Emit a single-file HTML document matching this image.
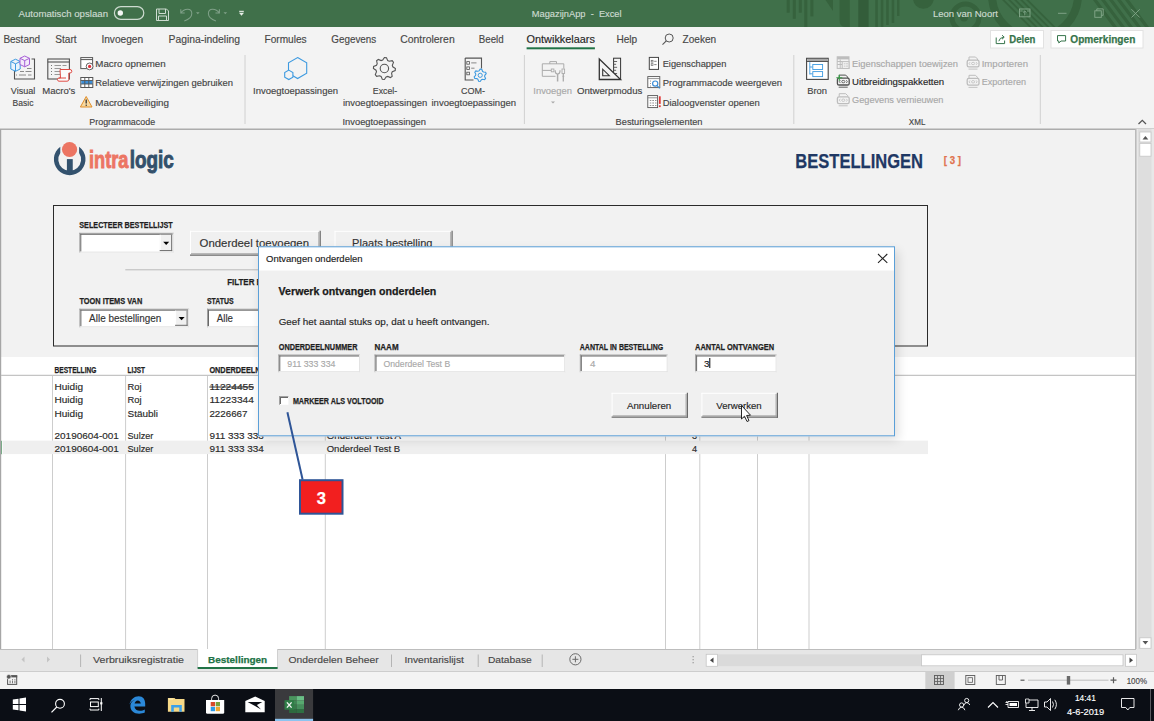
<!DOCTYPE html>
<html><head><meta charset="utf-8"><title>MagazijnApp - Excel</title>
<style>
html,body{margin:0;padding:0;width:1154px;height:721px;overflow:hidden;background:#f3f3f3;}
svg{display:block;font-family:"Liberation Sans", sans-serif;}
text{white-space:pre;}
</style></head><body>
<svg width="1154" height="721" viewBox="0 0 1154 721">
<rect x="0" y="0" width="1154" height="27" fill="#40704a" />
<clipPath id="tb"><rect x="0" y="0" width="1154" height="27"/></clipPath><g clip-path="url(#tb)">
<rect x="786.7" y="0" width="3" height="12.7" fill="#36623d" />
<rect x="792.8" y="0" width="3" height="18.8" fill="#36623d" />
<rect x="798.8" y="0" width="3" height="12.7" fill="#36623d" />
<rect x="804.3" y="0" width="3" height="27" fill="#36623d" />
<rect x="810.4" y="0" width="3" height="16.4" fill="#36623d" />
<path d="M825.5 0 L833 0 L833 11 Z" fill="#36623d" stroke="none" stroke-width="1" />
<path d="M839.5 0 H849.8 V27 H845 Q839.5 27 839.5 20 Z" fill="#36623d" stroke="none" stroke-width="1" />
<rect x="858.3" y="0" width="10.3" height="27" fill="#335d3a" />
<rect x="875.3" y="0" width="2.5" height="27" fill="#36623d" />
<rect x="880.8" y="0" width="2.5" height="27" fill="#36623d" />
<rect x="886.2" y="0" width="2.5" height="25" fill="#36623d" />
<rect x="891.7" y="0" width="2.5" height="23" fill="#36623d" />
<rect x="897" y="0" width="2.5" height="16" fill="#36623d" />
<circle cx="923.4" cy="-1.7" r="10.4" fill="#36623d"/>
<circle cx="965.5" cy="17.5" r="13.5" fill="none" stroke="#36623d" stroke-width="5"/>
<circle cx="964" cy="17.5" r="4" fill="#36623d"/>
<circle cx="1035" cy="-5" r="43" fill="none" stroke="#36623d" stroke-width="8"/>
<path d="M1002 0 L1004.6 0 L1031.6 27 L1029 27 Z" fill="#36623d" stroke="none" stroke-width="1" />
<path d="M1008 0 L1010.6 0 L1037.6 27 L1035 27 Z" fill="#36623d" stroke="none" stroke-width="1" />
<path d="M1014 0 L1016.6 0 L1043.6 27 L1041 27 Z" fill="#36623d" stroke="none" stroke-width="1" />
<path d="M1020 0 L1022.6 0 L1049.6 27 L1047 27 Z" fill="#36623d" stroke="none" stroke-width="1" />
<path d="M1026 0 L1028.6 0 L1055.6 27 L1053 27 Z" fill="#36623d" stroke="none" stroke-width="1" />
<path d="M1093 0 L1097 0 L1117 27 L1113 27 Z" fill="#36623d" stroke="none" stroke-width="1" />
<path d="M1101 0 L1105 0 L1125 27 L1121 27 Z" fill="#36623d" stroke="none" stroke-width="1" />
<path d="M1109 0 L1113 0 L1133 27 L1129 27 Z" fill="#36623d" stroke="none" stroke-width="1" />
<path d="M1117 0 L1121 0 L1141 27 L1137 27 Z" fill="#36623d" stroke="none" stroke-width="1" />
<path d="M1125 0 L1129 0 L1149 27 L1145 27 Z" fill="#36623d" stroke="none" stroke-width="1" />
</g>
<text x="18.6" y="16.6" font-size="9.4" fill="#cddbd0" textLength="89.4" lengthAdjust="spacingAndGlyphs" stroke="#cddbd0" stroke-width="0.15" >Automatisch opslaan</text>
<rect x="114.4" y="6.6" width="29.4" height="12.8" rx="6.4" fill="none" stroke="#cddbd0" stroke-width="1.2"/>
<circle cx="120.3" cy="13" r="2.7" fill="#f4f6f4"/>
<path d="M156.5 9 H166.5 L168.5 11 V20.5 H156.5 Z M159 9 V13.5 H165.5 V9 M158.5 20.5 V16 H166.5 V20.5" fill="none" stroke="#cddbd0" stroke-width="1" />
<path d="M180.8 9.2 V13 H184.7 M180.8 13 C184.5 7.8 191.8 7.8 191.8 13.5 C191.8 17 188.5 19.5 184.3 21" fill="none" stroke="#7fa088" stroke-width="1.05" />
<path d="M196 12.2 L199.6 12.2 L197.8 14.2 Z" fill="#7fa088" stroke="none" stroke-width="1" />
<path d="M219.4 9.2 V13 H215.5 M219.4 13 C215.7 7.8 208.4 7.8 208.4 13.5 C208.4 17 211.7 19.5 215.9 21" fill="none" stroke="#7fa088" stroke-width="1.05" />
<path d="M223.5 12.2 L227.1 12.2 L225.3 14.2 Z" fill="#7fa088" stroke="none" stroke-width="1" />
<rect x="239.2" y="10.8" width="4.6" height="1.1" fill="#e8efe9" />
<path d="M239 12.8 L244 12.8 L241.5 15.8 Z" fill="#e8efe9" stroke="none" stroke-width="1" />
<text x="531.8" y="16.6" font-size="9.4" fill="#cddbd0" textLength="89.8" lengthAdjust="spacingAndGlyphs" stroke="#cddbd0" stroke-width="0.15" >MagazijnApp  -  Excel</text>
<text x="933.0" y="16.6" font-size="9.4" fill="#cddbd0" textLength="65.0" lengthAdjust="spacingAndGlyphs" stroke="#cddbd0" stroke-width="0.15" >Leon van Noort</text>
<rect x="1019.5" y="9" width="10.5" height="7.8" fill="none" stroke="#84a88b" stroke-width="0.9"/>
<path d="M1024.75 15.5 V11 M1023 12.6 L1024.75 10.9 L1026.5 12.6 M1019.5 11 H1022.5 M1027 11 H1030" fill="none" stroke="#84a88b" stroke-width="0.8" />
<line x1="1058" y1="13.3" x2="1066.5" y2="13.3" stroke="#84a88b" stroke-width="0.9" />
<rect x="1094.8" y="10.8" width="6.5" height="6.5" fill="none" stroke="#84a88b" stroke-width="0.9"/>
<path d="M1096.8 10.8 V8.9 H1103.2 V15.3 H1101.3" fill="none" stroke="#84a88b" stroke-width="0.9" />
<path d="M1131.5 9.3 L1139.7 17.5 M1139.7 9.3 L1131.5 17.5" fill="none" stroke="#84a88b" stroke-width="0.9" />
<rect x="0" y="27" width="1154" height="102" fill="#f3f3f3" />
<rect x="0" y="128.5" width="1154" height="1.5" fill="#acacac" />
<text x="3.4" y="43.3" font-size="10.3" fill="#474747" textLength="36.7" lengthAdjust="spacingAndGlyphs" stroke="#474747" stroke-width="0.15" >Bestand</text>
<text x="55.2" y="43.3" font-size="10.3" fill="#474747" textLength="21.4" lengthAdjust="spacingAndGlyphs" stroke="#474747" stroke-width="0.15" >Start</text>
<text x="101.4" y="43.3" font-size="10.3" fill="#474747" textLength="41.7" lengthAdjust="spacingAndGlyphs" stroke="#474747" stroke-width="0.15" >Invoegen</text>
<text x="168.5" y="43.3" font-size="10.3" fill="#474747" textLength="71.5" lengthAdjust="spacingAndGlyphs" stroke="#474747" stroke-width="0.15" >Pagina-indeling</text>
<text x="264.5" y="43.3" font-size="10.3" fill="#474747" textLength="42.1" lengthAdjust="spacingAndGlyphs" stroke="#474747" stroke-width="0.15" >Formules</text>
<text x="331.3" y="43.3" font-size="10.3" fill="#474747" textLength="44.9" lengthAdjust="spacingAndGlyphs" stroke="#474747" stroke-width="0.15" >Gegevens</text>
<text x="400.2" y="43.3" font-size="10.3" fill="#474747" textLength="54.5" lengthAdjust="spacingAndGlyphs" stroke="#474747" stroke-width="0.15" >Controleren</text>
<text x="478.8" y="43.3" font-size="10.3" fill="#474747" textLength="24.9" lengthAdjust="spacingAndGlyphs" stroke="#474747" stroke-width="0.15" >Beeld</text>
<text x="616.4" y="43.3" font-size="10.3" fill="#474747" textLength="20.8" lengthAdjust="spacingAndGlyphs" stroke="#474747" stroke-width="0.15" >Help</text>
<text x="682.6" y="43.3" font-size="10.3" fill="#474747" textLength="33.6" lengthAdjust="spacingAndGlyphs" stroke="#474747" stroke-width="0.15" >Zoeken</text>
<text x="526.6" y="43.3" font-size="10.3" fill="#262626" textLength="68.3" lengthAdjust="spacingAndGlyphs" stroke="#262626" stroke-width="0.15" >Ontwikkelaars</text>
<rect x="526.6" y="47.3" width="68.3" height="2" fill="#217346" />
<circle cx="669.2" cy="38" r="4" fill="none" stroke="#555" stroke-width="1"/>
<line x1="666.3" y1="40.9" x2="662.5" y2="44.7" stroke="#555" stroke-width="1.1" />
<rect x="990.5" y="30.5" width="53" height="17.5" fill="#fff" stroke="#e2e2e2" stroke-width="1"/>
<rect x="1051" y="30.5" width="92" height="17.5" fill="#fff" stroke="#e2e2e2" stroke-width="1"/>
<text x="1009.3" y="43.2" font-size="10.5" fill="#36744b" font-weight="bold" textLength="26.0" lengthAdjust="spacingAndGlyphs" stroke="#36744b" stroke-width="0.25" >Delen</text>
<text x="1070.3" y="43.2" font-size="10.5" fill="#36744b" font-weight="bold" textLength="65.0" lengthAdjust="spacingAndGlyphs" stroke="#36744b" stroke-width="0.25" >Opmerkingen</text>
<path d="M996.2 37.5 V43.6 H1004.6 V40.5 M998.8 41.2 Q999.5 37.6 1003.8 37.2 M1002 35.2 L1004.2 37.2 L1002 39.2" fill="none" stroke="#36744b" stroke-width="1" />
<path d="M1057.5 35.6 H1065.6 V41 H1061 L1058.8 43 V41 H1057.5 Z" fill="none" stroke="#36744b" stroke-width="1" />
<line x1="245" y1="55" x2="245" y2="124" stroke="#d0d0d0" stroke-width="1" />
<line x1="524.4" y1="55" x2="524.4" y2="124" stroke="#d0d0d0" stroke-width="1" />
<line x1="793.8" y1="55" x2="793.8" y2="124" stroke="#d0d0d0" stroke-width="1" />
<line x1="1040.3" y1="55" x2="1040.3" y2="124" stroke="#d0d0d0" stroke-width="1" />
<text x="89.3" y="124.6" font-size="9.5" fill="#444444" textLength="65.8" lengthAdjust="spacingAndGlyphs" stroke="#444444" stroke-width="0.15" >Programmacode</text>
<text x="342.5" y="124.6" font-size="9.5" fill="#444444" textLength="83.5" lengthAdjust="spacingAndGlyphs" stroke="#444444" stroke-width="0.15" >Invoegtoepassingen</text>
<text x="615.6" y="124.6" font-size="9.5" fill="#444444" textLength="86.9" lengthAdjust="spacingAndGlyphs" stroke="#444444" stroke-width="0.15" >Besturingselementen</text>
<text x="908.8" y="124.6" font-size="9.5" fill="#444444" textLength="16.6" lengthAdjust="spacingAndGlyphs" stroke="#444444" stroke-width="0.15" >XML</text>
<text x="10.8" y="93.8" font-size="9.5" fill="#444444" textLength="24.4" lengthAdjust="spacingAndGlyphs" stroke="#444444" stroke-width="0.15" >Visual</text>
<text x="12.6" y="106.4" font-size="9.5" fill="#444444" textLength="20.8" lengthAdjust="spacingAndGlyphs" stroke="#444444" stroke-width="0.15" >Basic</text>
<text x="42.2" y="93.8" font-size="9.5" fill="#444444" textLength="33.1" lengthAdjust="spacingAndGlyphs" stroke="#444444" stroke-width="0.15" >Macro's</text>
<text x="253.0" y="93.8" font-size="9.5" fill="#444444" textLength="85.0" lengthAdjust="spacingAndGlyphs" stroke="#444444" stroke-width="0.15" >Invoegtoepassingen</text>
<text x="372.8" y="93.8" font-size="9.5" fill="#444444" textLength="24.4" lengthAdjust="spacingAndGlyphs" stroke="#444444" stroke-width="0.15" >Excel-</text>
<text x="343.0" y="106.4" font-size="9.5" fill="#444444" textLength="84.2" lengthAdjust="spacingAndGlyphs" stroke="#444444" stroke-width="0.15" >invoegtoepassingen</text>
<text x="461.0" y="93.8" font-size="9.5" fill="#444444" textLength="24.0" lengthAdjust="spacingAndGlyphs" stroke="#444444" stroke-width="0.15" >COM-</text>
<text x="431.5" y="106.4" font-size="9.5" fill="#444444" textLength="84.5" lengthAdjust="spacingAndGlyphs" stroke="#444444" stroke-width="0.15" >invoegtoepassingen</text>
<text x="533.3" y="93.8" font-size="9.5" fill="#a8a8a8" textLength="38.7" lengthAdjust="spacingAndGlyphs" stroke="#a8a8a8" stroke-width="0.15" >Invoegen</text>
<path d="M551 101.5 L555 101.5 L553 103.5 Z" fill="#a8a8a8" stroke="none" stroke-width="1" />
<text x="577.0" y="93.8" font-size="9.5" fill="#444444" textLength="65.3" lengthAdjust="spacingAndGlyphs" stroke="#444444" stroke-width="0.15" >Ontwerpmodus</text>
<text x="807.2" y="93.8" font-size="9.5" fill="#444444" textLength="19.8" lengthAdjust="spacingAndGlyphs" stroke="#444444" stroke-width="0.15" >Bron</text>
<text x="95.3" y="66.9" font-size="9.5" fill="#444444" textLength="70.4" lengthAdjust="spacingAndGlyphs" stroke="#444444" stroke-width="0.15" >Macro opnemen</text>
<text x="95.3" y="86.4" font-size="9.5" fill="#444444" textLength="137.6" lengthAdjust="spacingAndGlyphs" stroke="#444444" stroke-width="0.15" >Relatieve verwijzingen gebruiken</text>
<text x="95.3" y="105.7" font-size="9.5" fill="#444444" textLength="73.7" lengthAdjust="spacingAndGlyphs" stroke="#444444" stroke-width="0.15" >Macrobeveiliging</text>
<text x="662.7" y="66.9" font-size="9.5" fill="#444444" textLength="63.7" lengthAdjust="spacingAndGlyphs" stroke="#444444" stroke-width="0.15" >Eigenschappen</text>
<text x="662.7" y="86.4" font-size="9.5" fill="#444444" textLength="119.3" lengthAdjust="spacingAndGlyphs" stroke="#444444" stroke-width="0.15" >Programmacode weergeven</text>
<text x="662.7" y="105.7" font-size="9.5" fill="#444444" textLength="97.0" lengthAdjust="spacingAndGlyphs" stroke="#444444" stroke-width="0.15" >Dialoogvenster openen</text>
<text x="852.0" y="66.6" font-size="9.5" fill="#a8a8a8" textLength="106.0" lengthAdjust="spacingAndGlyphs" stroke="#a8a8a8" stroke-width="0.15" >Eigenschappen toewijzen</text>
<text x="852.0" y="85.1" font-size="9.5" fill="#262626" textLength="92.2" lengthAdjust="spacingAndGlyphs" stroke="#262626" stroke-width="0.15" >Uitbreidingspakketten</text>
<text x="852.0" y="103.4" font-size="9.5" fill="#a8a8a8" textLength="91.5" lengthAdjust="spacingAndGlyphs" stroke="#a8a8a8" stroke-width="0.15" >Gegevens vernieuwen</text>
<text x="981.7" y="66.6" font-size="9.5" fill="#a8a8a8" textLength="46.3" lengthAdjust="spacingAndGlyphs" stroke="#a8a8a8" stroke-width="0.15" >Importeren</text>
<text x="981.7" y="85.1" font-size="9.5" fill="#a8a8a8" textLength="44.3" lengthAdjust="spacingAndGlyphs" stroke="#a8a8a8" stroke-width="0.15" >Exporteren</text>
<path d="M1138.5 124 L1142.3 120.3 L1146 124" fill="none" stroke="#555" stroke-width="1.3" />
<path d="M14.5 66 V79 H34.5 V59 H31.5" fill="none" stroke="#505050" stroke-width="1.1" />
<line x1="27" y1="68.5" x2="31.5" y2="68.5" stroke="#8a8a8a" stroke-width="1" />
<line x1="20" y1="71.5" x2="24" y2="71.5" stroke="#8a8a8a" stroke-width="1" />
<line x1="25.5" y1="71.5" x2="31.5" y2="71.5" stroke="#8a8a8a" stroke-width="1" />
<line x1="16" y1="75" x2="17" y2="75" stroke="#8a8a8a" stroke-width="1" />
<line x1="19" y1="75" x2="26" y2="75" stroke="#8a8a8a" stroke-width="1" />
<line x1="28" y1="75" x2="31.5" y2="75" stroke="#8a8a8a" stroke-width="1" />
<path d="M10.8 61.5 L15.5 59.2 L20.2 61.5 V69 L15.5 71.3 L10.8 69 Z M10.8 61.5 L15.5 63.8 L20.2 61.5 M15.5 63.8 V71.3" fill="#eaf4fc" stroke="#3d9ae0" stroke-width="1" />
<path d="M20 58.3 L24.7 56 L29.5 58.3 V64.5 L24.7 66.8 L20 64.5 Z M20 58.3 L24.7 60.6 L29.5 58.3 M24.7 60.6 V66.8" fill="#f3eafa" stroke="#a65fd6" stroke-width="1" />
<rect x="47.8" y="59" width="21.6" height="20" fill="none" stroke="#505050" stroke-width="1.1"/>
<line x1="47.8" y1="62" x2="69.4" y2="62" stroke="#505050" stroke-width="1.1" />
<line x1="51" y1="65.5" x2="52" y2="65.5" stroke="#777" stroke-width="1" />
<line x1="54.5" y1="65.5" x2="61" y2="65.5" stroke="#999" stroke-width="1" />
<line x1="51" y1="68.5" x2="52" y2="68.5" stroke="#777" stroke-width="1" />
<line x1="54.5" y1="68.5" x2="61" y2="68.5" stroke="#999" stroke-width="1" />
<line x1="51" y1="71.5" x2="52" y2="71.5" stroke="#777" stroke-width="1" />
<line x1="54.5" y1="71.5" x2="61" y2="71.5" stroke="#999" stroke-width="1" />
<line x1="51" y1="74.5" x2="52" y2="74.5" stroke="#777" stroke-width="1" />
<line x1="54.5" y1="74.5" x2="61" y2="74.5" stroke="#999" stroke-width="1" />
<line x1="62.5" y1="65.5" x2="66.5" y2="65.5" stroke="#999" stroke-width="1" />
<path d="M60 69.5 H70 Q71.8 69.5 71.8 71.3 Q71.8 73 70 73 H68.8 V79.5 Q68.8 81.2 67 81.2 H59 Q57.5 81.2 57.5 79.5 Q57.5 78 59 78 H60.5 Z" fill="#fbfbfb" stroke="#e04a43" stroke-width="1" />
<line x1="59" y1="78" x2="66" y2="78" stroke="#e04a43" stroke-width="1" />
<rect x="80.8" y="57.6" width="11.8" height="11" fill="#fff" stroke="#555" stroke-width="1"/>
<line x1="80.8" y1="59.6" x2="92.6" y2="59.6" stroke="#555" stroke-width="1" />
<circle cx="89.6" cy="66.4" r="3.4" fill="#fff" stroke="#555" stroke-width="0.9"/>
<circle cx="89.6" cy="66.4" r="1.6" fill="#e0303a"/>
<rect x="80.8" y="77.5" width="12" height="10" fill="#fff" stroke="#555" stroke-width="1"/>
<rect x="81.3" y="80.5" width="11" height="3.5" fill="#3d8fd8" />
<line x1="84.8" y1="77.5" x2="84.8" y2="87.5" stroke="#555" stroke-width="0.9" />
<line x1="88.8" y1="77.5" x2="88.8" y2="87.5" stroke="#555" stroke-width="0.9" />
<line x1="80.8" y1="80.5" x2="92.8" y2="80.5" stroke="#555" stroke-width="0.9" />
<line x1="80.8" y1="84" x2="92.8" y2="84" stroke="#555" stroke-width="0.9" />
<path d="M86.2 96.5 L92 107 H80.4 Z" fill="#f8d9a0" stroke="#e08e2b" stroke-width="1" />
<line x1="86.2" y1="99.5" x2="86.2" y2="103.5" stroke="#333" stroke-width="1.3" />
<rect x="85.6" y="104.6" width="1.3" height="1.3" fill="#333" />
<path d="M297.6 57.6 L306.7 62.8 L306.7 73.3 L297.6 78.6 L288.5 73.3 L288.5 62.8 Z" fill="none" stroke="#3d9ae0" stroke-width="1.1" />
<path d="M288.8 70.1 L292.9 72.5 L292.9 77.1 L288.8 79.5 L284.7 77.1 L284.7 72.5 Z" fill="#f3f3f3" stroke="#3d9ae0" stroke-width="1.1" />
<path d="M384.4 57.5 L386.5 57.7 L387.7 60.6 L389.2 61.3 L392.2 60.7 L393.5 62.4 L392.3 65.2 L392.8 66.8 L395.4 68.5 L395.2 70.6 L392.3 71.8 L391.6 73.3 L392.2 76.3 L390.5 77.6 L387.7 76.4 L386.1 76.9 L384.4 79.5 L382.3 79.3 L381.1 76.4 L379.6 75.7 L376.6 76.3 L375.3 74.6 L376.5 71.8 L376.0 70.2 L373.4 68.5 L373.6 66.4 L376.5 65.2 L377.2 63.7 L376.6 60.7 L378.3 59.4 L381.1 60.6 L382.7 60.1 Z" fill="none" stroke="#555" stroke-width="1.1" />
<circle cx="384.4" cy="68.5" r="4.2" fill="none" stroke="#555" stroke-width="1.1"/>
<path d="M465.2 58.1 H481.5 V68.5 M465.2 58.1 V80 H473.5" fill="none" stroke="#555" stroke-width="1.1" />
<rect x="466.8" y="61.6" width="2.6" height="2.6" fill="none" stroke="#555" stroke-width="0.8"/>
<rect x="466.8" y="66.9" width="2.6" height="2.6" fill="none" stroke="#555" stroke-width="0.8"/>
<rect x="466.8" y="72.2" width="2.6" height="2.6" fill="none" stroke="#555" stroke-width="0.8"/>
<line x1="471.2" y1="62.9" x2="476.5" y2="62.9" stroke="#888" stroke-width="1" />
<line x1="471.2" y1="68.2" x2="474.5" y2="68.2" stroke="#888" stroke-width="1" />
<path d="M480.2 69.1 L481.8 69.3 L482.5 71.3 L483.5 72.0 L485.6 72.2 L486.2 73.7 L484.8 75.3 L484.6 76.5 L485.6 78.4 L484.6 79.7 L482.5 79.3 L481.4 79.7 L480.2 81.5 L478.6 81.3 L477.9 79.3 L476.9 78.6 L474.8 78.4 L474.2 76.9 L475.6 75.3 L475.8 74.1 L474.8 72.2 L475.8 70.9 L477.9 71.3 L479.0 70.9 Z" fill="#f3f3f3" stroke="#3d9ae0" stroke-width="1.1" />
<circle cx="480.2" cy="75.3" r="2.1" fill="none" stroke="#3d9ae0" stroke-width="1"/>
<path d="M542.3 76.3 V63.8 H563.8 V68.5 M549.8 63.8 V61.6 H556.5 V63.8 M542.3 70.4 H551 M542.3 76.3 H555.5" fill="none" stroke="#ababab" stroke-width="1" />
<rect x="551.3" y="69" width="2.6" height="2.8" fill="none" stroke="#ababab" stroke-width="0.9"/>
<path d="M557.6 74 V81.5" fill="none" stroke="#ababab" stroke-width="1.5" />
<path d="M555.2 70.3 Q555 73.8 557.6 74 Q560.2 73.8 560 70.3" fill="none" stroke="#ababab" stroke-width="1.2" />
<rect x="562" y="69" width="2.6" height="4.5" fill="none" stroke="#ababab" stroke-width="0.9"/>
<path d="M563.3 73.5 V76.3 M562.4 76.3 H564.2 M563.3 76.3 V81.5" fill="none" stroke="#ababab" stroke-width="1.3" />
<rect x="613.6" y="58.2" width="7" height="21.3" fill="#f3f3f3" stroke="#333" stroke-width="1"/>
<line x1="613.6" y1="61.5" x2="617.1" y2="61.5" stroke="#555" stroke-width="0.9" />
<line x1="613.6" y1="64.3" x2="616.1" y2="64.3" stroke="#555" stroke-width="0.9" />
<line x1="613.6" y1="67.3" x2="617.1" y2="67.3" stroke="#555" stroke-width="0.9" />
<line x1="613.6" y1="70.3" x2="616.1" y2="70.3" stroke="#555" stroke-width="0.9" />
<line x1="613.6" y1="73.5" x2="617.1" y2="73.5" stroke="#555" stroke-width="0.9" />
<path d="M599.3 59 L620.6 79.5 H599.3 Z" fill="#f3f3f3" stroke="#333" stroke-width="1.3" />
<path d="M602.7 69.2 V75.7 H609.3 Z" fill="none" stroke="#333" stroke-width="1.1" />
<rect x="649.3" y="57.4" width="9.2" height="12" fill="#fff" stroke="#444" stroke-width="1"/>
<rect x="651.2" y="60.300000000000004" width="1.8" height="1.8" fill="none" stroke="#666" stroke-width="0.7"/>
<rect x="654.2" y="60.800000000000004" width="2.4" height="0.9" fill="#777" />
<rect x="651.2" y="63.699999999999996" width="1.8" height="1.8" fill="none" stroke="#666" stroke-width="0.7"/>
<rect x="654.2" y="64.19999999999999" width="2.4" height="0.9" fill="#777" />
<rect x="647.8" y="76.6" width="12" height="11" fill="#fff" stroke="#555" stroke-width="0.9"/>
<line x1="647.8" y1="78.6" x2="659.8" y2="78.6" stroke="#777" stroke-width="0.8" />
<rect x="650" y="80.6" width="0.9" height="0.9" fill="#777" />
<rect x="650" y="83.1" width="0.9" height="0.9" fill="#777" />
<rect x="650" y="85.6" width="0.9" height="0.9" fill="#777" />
<circle cx="655.2" cy="83.6" r="2.6" fill="none" stroke="#3d8fd8" stroke-width="1.2"/>
<line x1="657" y1="85.6" x2="659.8" y2="88.4" stroke="#3d8fd8" stroke-width="1.3" />
<rect x="647.8" y="95.6" width="9.8" height="12" fill="#fff" stroke="#555" stroke-width="0.9"/>
<line x1="647.8" y1="97.8" x2="657.6" y2="97.8" stroke="#777" stroke-width="0.8" />
<line x1="649.8" y1="100.5" x2="651.3" y2="100.5" stroke="#888" stroke-width="0.9" />
<line x1="652.3" y1="100.5" x2="654" y2="100.5" stroke="#888" stroke-width="0.9" />
<line x1="655" y1="100.5" x2="656.5" y2="100.5" stroke="#888" stroke-width="0.9" />
<line x1="649.8" y1="103" x2="651.3" y2="103" stroke="#888" stroke-width="0.9" />
<line x1="652.3" y1="103" x2="654" y2="103" stroke="#888" stroke-width="0.9" />
<line x1="655" y1="103" x2="656.5" y2="103" stroke="#888" stroke-width="0.9" />
<line x1="649.8" y1="105.5" x2="651.3" y2="105.5" stroke="#888" stroke-width="0.9" />
<line x1="652.3" y1="105.5" x2="654" y2="105.5" stroke="#888" stroke-width="0.9" />
<line x1="655" y1="105.5" x2="656.5" y2="105.5" stroke="#888" stroke-width="0.9" />
<rect x="658.9" y="96.3" width="1.8" height="7.6" fill="#e03838" />
<rect x="658.9" y="105.3" width="1.8" height="1.8" fill="#e03838" />
<rect x="806.6" y="58.3" width="21.6" height="21.1" fill="#fff" stroke="#444" stroke-width="1.1"/>
<rect x="807.2" y="58.9" width="20.4" height="2.6" fill="#a8a8a8" />
<line x1="806.6" y1="61.5" x2="828.2" y2="61.5" stroke="#444" stroke-width="0.9" />
<path d="M809.8 62.2 V74.5 M809.8 67 H812.6 M809.8 73.8 H812.6" fill="none" stroke="#3d9ae0" stroke-width="0.9" />
<rect x="812.8" y="64.5" width="9.8" height="5" fill="none" stroke="#3d9ae0" stroke-width="0.9"/>
<rect x="812.8" y="71.6" width="9.8" height="5" fill="none" stroke="#3d9ae0" stroke-width="0.9"/>
<rect x="837.2" y="56.8" width="11.8" height="11.6" fill="none" stroke="#bdbdbd" stroke-width="1"/>
<rect x="837.2" y="56.8" width="11.8" height="2.6" fill="#bdbdbd" />
<line x1="837.2" y1="61.5" x2="842" y2="61.5" stroke="#bdbdbd" stroke-width="1" />
<line x1="837.2" y1="64.5" x2="842" y2="64.5" stroke="#bdbdbd" stroke-width="1" />
<line x1="840.2" y1="59.4" x2="840.2" y2="68.4" stroke="#bdbdbd" stroke-width="1" />
<rect x="842.2" y="61.6" width="6.8" height="6.8" fill="#f3f3f3" stroke="#bdbdbd" stroke-width="1"/>
<rect x="843.8" y="63.3" width="1" height="1" fill="#bdbdbd" />
<rect x="843.8" y="65.6" width="1" height="1" fill="#bdbdbd" />
<line x1="845.5" y1="63.8" x2="848" y2="63.8" stroke="#bdbdbd" stroke-width="0.8" />
<line x1="845.5" y1="66.1" x2="848" y2="66.1" stroke="#bdbdbd" stroke-width="0.8" />
<path d="M839.2 78.1 V75.1 H845.7 L847.7 77.1 V78.1" fill="none" stroke="#505050" stroke-width="1" />
<rect x="837.4000000000001" y="78.19999999999999" width="11.8" height="6.8" rx="1.6" fill="#f3f3f3" stroke="#505050" stroke-width="1.3"/>
<path d="M840.3000000000001 80.19999999999999 L839.3000000000001 81.6 L840.3000000000001 83.0 M846.3000000000001 80.19999999999999 L847.3000000000001 81.6 L846.3000000000001 83.0" fill="none" stroke="#505050" stroke-width="0.8" />
<ellipse cx="843.3000000000001" cy="81.6" rx="1.6" ry="1.2" fill="none" stroke="#505050" stroke-width="0.8"/>
<line x1="838.7" y1="87.19999999999999" x2="847.7" y2="87.19999999999999" stroke="#505050" stroke-width="0.9" />
<path d="M836.3 77.8 H842.3 M839.3 74.8 V80.8" fill="none" stroke="#3aa04a" stroke-width="1.1" />
<path d="M839.2 96.7 V93.7 H845.7 L847.7 95.7 V96.7" fill="none" stroke="#bdbdbd" stroke-width="1" />
<rect x="837.4000000000001" y="96.8" width="11.8" height="6.8" rx="1.6" fill="#f3f3f3" stroke="#bdbdbd" stroke-width="1.3"/>
<path d="M840.3000000000001 98.8 L839.3000000000001 100.2 L840.3000000000001 101.60000000000001 M846.3000000000001 98.8 L847.3000000000001 100.2 L846.3000000000001 101.60000000000001" fill="none" stroke="#bdbdbd" stroke-width="0.8" />
<ellipse cx="843.3000000000001" cy="100.2" rx="1.6" ry="1.2" fill="none" stroke="#bdbdbd" stroke-width="0.8"/>
<line x1="838.7" y1="105.8" x2="847.7" y2="105.8" stroke="#bdbdbd" stroke-width="0.9" />
<path d="M969.0 60.0 V57.0 H975.5 L977.5 59.0 V60.0" fill="none" stroke="#bdbdbd" stroke-width="1" />
<rect x="967.2" y="60.1" width="11.8" height="6.8" rx="1.6" fill="#f3f3f3" stroke="#bdbdbd" stroke-width="1.3"/>
<path d="M970.1 62.1 L969.1 63.5 L970.1 64.9 M976.1 62.1 L977.1 63.5 L976.1 64.9" fill="none" stroke="#bdbdbd" stroke-width="0.8" />
<ellipse cx="973.1" cy="63.5" rx="1.6" ry="1.2" fill="none" stroke="#bdbdbd" stroke-width="0.8"/>
<line x1="968.5" y1="69.1" x2="977.5" y2="69.1" stroke="#bdbdbd" stroke-width="0.9" />
<path d="M969.0 78.3 V75.3 H975.5 L977.5 77.3 V78.3" fill="none" stroke="#bdbdbd" stroke-width="1" />
<rect x="967.2" y="78.39999999999999" width="11.8" height="6.8" rx="1.6" fill="#f3f3f3" stroke="#bdbdbd" stroke-width="1.3"/>
<path d="M970.1 80.39999999999999 L969.1 81.8 L970.1 83.2 M976.1 80.39999999999999 L977.1 81.8 L976.1 83.2" fill="none" stroke="#bdbdbd" stroke-width="0.8" />
<ellipse cx="973.1" cy="81.8" rx="1.6" ry="1.2" fill="none" stroke="#bdbdbd" stroke-width="0.8"/>
<line x1="968.5" y1="87.39999999999999" x2="977.5" y2="87.39999999999999" stroke="#bdbdbd" stroke-width="0.9" />
<rect x="0" y="130" width="1136" height="227" fill="#f2f2f2" />
<rect x="0" y="357" width="1136" height="292" fill="#ffffff" />
<rect x="0" y="129" width="1.2" height="520" fill="#a6a6a6" />
<line x1="1" y1="375.3" x2="1136" y2="375.3" stroke="#c4c4c4" stroke-width="1.2" />
<line x1="52.5" y1="375.8" x2="52.5" y2="649" stroke="#cdcdcd" stroke-width="1" />
<line x1="125.6" y1="375.8" x2="125.6" y2="649" stroke="#cdcdcd" stroke-width="1" />
<line x1="207.5" y1="375.8" x2="207.5" y2="649" stroke="#cdcdcd" stroke-width="1" />
<line x1="325.3" y1="375.8" x2="325.3" y2="649" stroke="#cdcdcd" stroke-width="1" />
<line x1="665.5" y1="375.8" x2="665.5" y2="649" stroke="#cdcdcd" stroke-width="1" />
<line x1="699.8" y1="375.8" x2="699.8" y2="649" stroke="#cdcdcd" stroke-width="1" />
<line x1="757.5" y1="375.8" x2="757.5" y2="649" stroke="#cdcdcd" stroke-width="1" />
<line x1="809" y1="375.8" x2="809" y2="649" stroke="#cdcdcd" stroke-width="1" />
<rect x="3" y="440.6" width="925" height="13.5" fill="#efefef" />
<rect x="1.2" y="440.8" width="1" height="13.4" fill="#5f9b70" />
<rect x="2.2" y="440.8" width="0.8" height="13.4" fill="#ffffff" />
<rect x="1136" y="129" width="18" height="520" fill="#e8e8e8" />
<rect x="1135.1" y="129" width="1.4" height="520" fill="#b4b4b4" />
<rect x="1138" y="129" width="13.5" height="520" fill="#dedede" />
<rect x="1139.8" y="132" width="11.2" height="10" fill="#fff" stroke="#c6c6c6" stroke-width="0.8"/>
<path d="M1142.5 139.5 L1145.4 136 L1148.3 139.5 Z" fill="#555" stroke="none" stroke-width="1" />
<rect x="1139.8" y="143.4" width="11.2" height="12.8" fill="#fff" stroke="#c6c6c6" stroke-width="0.8"/>
<rect x="1139.8" y="637.8" width="11.2" height="10.5" fill="#fff" stroke="#c6c6c6" stroke-width="0.8"/>
<path d="M1142.5 641 L1148.3 641 L1145.4 644.5 Z" fill="#555" stroke="none" stroke-width="1" />
<path d="M60.3 146.7 A15.8 15.8 0 1 0 79.1 146.7 L79.1 152.95 A11.4 11.4 0 1 1 60.3 152.95 Z" fill="#33526e"/>
<rect x="66.9" y="159.1" width="5.85" height="14" fill="#33526e" />
<circle cx="69.55" cy="149.5" r="7.6" fill="#ec7563"/>
<text x="89.0" y="168.4" font-size="23.5" fill="#ec7563" font-weight="bold" textLength="39.5" lengthAdjust="spacingAndGlyphs" stroke="#ec7563" stroke-width="0.9">intra</text>
<text x="129.7" y="168.4" font-size="23.5" fill="#33506b" font-weight="bold" textLength="44.1" lengthAdjust="spacingAndGlyphs" stroke="#33506b" stroke-width="0.9">logic</text>
<text x="795.3" y="167.7" font-size="19.4" fill="#1f3864" font-weight="bold" textLength="127.7" lengthAdjust="spacingAndGlyphs" stroke="#1f3864" stroke-width="0.25" >BESTELLINGEN</text>
<text x="943.8" y="164.3" font-size="11" fill="#e0734f" font-weight="bold" textLength="17.2" lengthAdjust="spacingAndGlyphs" stroke="#e0734f" stroke-width="0.25" >[ 3 ]</text>
<rect x="53.5" y="205.5" width="874" height="140.5" fill="none" stroke="#2b2b2b" stroke-width="1"/>
<text x="79.3" y="227.8" font-size="9.6" fill="#1f1f1f" font-weight="bold" textLength="93.4" lengthAdjust="spacingAndGlyphs" stroke="#1f1f1f" stroke-width="0.25" >SELECTEER BESTELLIJST</text>
<rect x="79.3" y="232.8" width="94.39999999999999" height="19.799999999999983" fill="#fff" />
<line x1="79.3" y1="233.3" x2="173.7" y2="233.3" stroke="#a0a0a0" stroke-width="1" />
<line x1="79.8" y1="232.8" x2="79.8" y2="252.6" stroke="#a0a0a0" stroke-width="1" />
<line x1="80.3" y1="234.3" x2="172.7" y2="234.3" stroke="#696969" stroke-width="1" />
<line x1="80.8" y1="233.8" x2="80.8" y2="251.6" stroke="#696969" stroke-width="1" />
<line x1="79.3" y1="252.1" x2="173.7" y2="252.1" stroke="#e3e3e3" stroke-width="1" />
<line x1="173.2" y1="232.8" x2="173.2" y2="252.6" stroke="#e3e3e3" stroke-width="1" />
<rect x="159.7" y="234.8" width="12.5" height="16.299999999999983" fill="#f0f0f0" />
<line x1="160.2" y1="234.8" x2="160.2" y2="250.6" stroke="#fff" stroke-width="1" />
<line x1="159.7" y1="250.6" x2="172.2" y2="250.6" stroke="#696969" stroke-width="1" />
<line x1="171.7" y1="234.8" x2="171.7" y2="251.1" stroke="#696969" stroke-width="1" />
<path d="M163.2 241.7 L169.2 241.7 L166.2 245.0 Z" fill="#000" stroke="none" stroke-width="1" />
<rect x="190" y="230.8" width="130.7" height="24.799999999999983" fill="#f0f0f0" />
<line x1="190" y1="231.3" x2="320.7" y2="231.3" stroke="#ffffff" stroke-width="1" />
<line x1="190.5" y1="230.8" x2="190.5" y2="255.6" stroke="#ffffff" stroke-width="1" />
<line x1="190" y1="255.1" x2="320.7" y2="255.1" stroke="#696969" stroke-width="1.2" />
<line x1="320.2" y1="230.8" x2="320.2" y2="255.6" stroke="#696969" stroke-width="1.2" />
<line x1="191" y1="253.79999999999998" x2="319.7" y2="253.79999999999998" stroke="#a0a0a0" stroke-width="1" />
<line x1="318.9" y1="231.8" x2="318.9" y2="254.6" stroke="#a0a0a0" stroke-width="1" />
<text x="199.6" y="247.0" font-size="11.5" fill="#333" textLength="109.4" lengthAdjust="spacingAndGlyphs" stroke="#333" stroke-width="0.15" >Onderdeel toevoegen</text>
<rect x="334.5" y="230.8" width="118.10000000000002" height="24.799999999999983" fill="#f0f0f0" />
<line x1="334.5" y1="231.3" x2="452.6" y2="231.3" stroke="#ffffff" stroke-width="1" />
<line x1="335.0" y1="230.8" x2="335.0" y2="255.6" stroke="#ffffff" stroke-width="1" />
<line x1="334.5" y1="255.1" x2="452.6" y2="255.1" stroke="#696969" stroke-width="1.2" />
<line x1="452.1" y1="230.8" x2="452.1" y2="255.6" stroke="#696969" stroke-width="1.2" />
<line x1="335.5" y1="253.79999999999998" x2="451.6" y2="253.79999999999998" stroke="#a0a0a0" stroke-width="1" />
<line x1="450.8" y1="231.8" x2="450.8" y2="254.6" stroke="#a0a0a0" stroke-width="1" />
<text x="352.1" y="247.0" font-size="11.5" fill="#333" textLength="80.4" lengthAdjust="spacingAndGlyphs" stroke="#333" stroke-width="0.15" >Plaats bestelling</text>
<line x1="125.3" y1="269.8" x2="890" y2="269.8" stroke="#bababa" stroke-width="1" />
<text x="227.2" y="285.0" font-size="9.8" fill="#1f1f1f" font-weight="bold" textLength="90.8" lengthAdjust="spacingAndGlyphs" stroke="#1f1f1f" stroke-width="0.25" >FILTER BESTELLINGEN</text>
<text x="79.4" y="303.5" font-size="9.2" fill="#1f1f1f" font-weight="bold" textLength="62.9" lengthAdjust="spacingAndGlyphs" stroke="#1f1f1f" stroke-width="0.25" >TOON ITEMS VAN</text>
<text x="207.0" y="303.5" font-size="9.2" fill="#1f1f1f" font-weight="bold" textLength="26.7" lengthAdjust="spacingAndGlyphs" stroke="#1f1f1f" stroke-width="0.25" >STATUS</text>
<rect x="79.4" y="308.7" width="109.69999999999999" height="18.600000000000023" fill="#fff" />
<line x1="79.4" y1="309.2" x2="189.1" y2="309.2" stroke="#a0a0a0" stroke-width="1" />
<line x1="79.9" y1="308.7" x2="79.9" y2="327.3" stroke="#a0a0a0" stroke-width="1" />
<line x1="80.4" y1="310.2" x2="188.1" y2="310.2" stroke="#696969" stroke-width="1" />
<line x1="80.9" y1="309.7" x2="80.9" y2="326.3" stroke="#696969" stroke-width="1" />
<line x1="79.4" y1="326.8" x2="189.1" y2="326.8" stroke="#e3e3e3" stroke-width="1" />
<line x1="188.6" y1="308.7" x2="188.6" y2="327.3" stroke="#e3e3e3" stroke-width="1" />
<rect x="175.1" y="310.7" width="12.5" height="15.100000000000023" fill="#f0f0f0" />
<line x1="175.6" y1="310.7" x2="175.6" y2="325.3" stroke="#fff" stroke-width="1" />
<line x1="175.1" y1="325.3" x2="187.6" y2="325.3" stroke="#696969" stroke-width="1" />
<line x1="187.1" y1="310.7" x2="187.1" y2="325.8" stroke="#696969" stroke-width="1" />
<path d="M178.6 317.0 L184.6 317.0 L181.6 320.3 Z" fill="#000" stroke="none" stroke-width="1" />
<text x="89.1" y="322.1" font-size="10.8" fill="#333" textLength="72.3" lengthAdjust="spacingAndGlyphs" stroke="#333" stroke-width="0.15" >Alle bestellingen</text>
<rect x="207" y="308.7" width="123" height="18.600000000000023" fill="#fff" />
<line x1="207" y1="309.2" x2="330" y2="309.2" stroke="#a0a0a0" stroke-width="1" />
<line x1="207.5" y1="308.7" x2="207.5" y2="327.3" stroke="#a0a0a0" stroke-width="1" />
<line x1="208" y1="310.2" x2="329" y2="310.2" stroke="#696969" stroke-width="1" />
<line x1="208.5" y1="309.7" x2="208.5" y2="326.3" stroke="#696969" stroke-width="1" />
<line x1="207" y1="326.8" x2="330" y2="326.8" stroke="#e3e3e3" stroke-width="1" />
<line x1="329.5" y1="308.7" x2="329.5" y2="327.3" stroke="#e3e3e3" stroke-width="1" />
<text x="216.8" y="322.1" font-size="10.8" fill="#333" textLength="16.2" lengthAdjust="spacingAndGlyphs" stroke="#333" stroke-width="0.15" >Alle</text>
<text x="54.5" y="372.5" font-size="8.2" fill="#1f1f1f" font-weight="bold" textLength="41.9" lengthAdjust="spacingAndGlyphs" stroke="#1f1f1f" stroke-width="0.25" >BESTELLING</text>
<text x="127.5" y="372.5" font-size="8.2" fill="#1f1f1f" font-weight="bold" textLength="17.5" lengthAdjust="spacingAndGlyphs" stroke="#1f1f1f" stroke-width="0.25" >LIJST</text>
<text x="209.4" y="372.5" font-size="8.2" fill="#1f1f1f" font-weight="bold" textLength="78.8" lengthAdjust="spacingAndGlyphs" stroke="#1f1f1f" stroke-width="0.25" >ONDERDEELNUMMER</text>
<text x="54.5" y="390.1" font-size="9.2" fill="#2a2a2a" textLength="28.5" lengthAdjust="spacingAndGlyphs" stroke="#2a2a2a" stroke-width="0.15" >Huidig</text>
<text x="127.5" y="390.1" font-size="9.2" fill="#2a2a2a" textLength="14.1" lengthAdjust="spacingAndGlyphs" stroke="#2a2a2a" stroke-width="0.15" >Roj</text>
<text x="209.4" y="390.1" font-size="9.2" fill="#2a2a2a" textLength="44.5" lengthAdjust="spacingAndGlyphs" stroke="#2a2a2a" stroke-width="0.15" >11224455</text>
<text x="54.5" y="403.4" font-size="9.2" fill="#2a2a2a" textLength="28.5" lengthAdjust="spacingAndGlyphs" stroke="#2a2a2a" stroke-width="0.15" >Huidig</text>
<text x="127.5" y="403.4" font-size="9.2" fill="#2a2a2a" textLength="14.1" lengthAdjust="spacingAndGlyphs" stroke="#2a2a2a" stroke-width="0.15" >Roj</text>
<text x="209.4" y="403.4" font-size="9.2" fill="#2a2a2a" textLength="44.5" lengthAdjust="spacingAndGlyphs" stroke="#2a2a2a" stroke-width="0.15" >11223344</text>
<text x="54.5" y="417.0" font-size="9.2" fill="#2a2a2a" textLength="28.5" lengthAdjust="spacingAndGlyphs" stroke="#2a2a2a" stroke-width="0.15" >Huidig</text>
<text x="127.5" y="417.0" font-size="9.2" fill="#2a2a2a" textLength="30.4" lengthAdjust="spacingAndGlyphs" stroke="#2a2a2a" stroke-width="0.15" >Stäubli</text>
<text x="209.4" y="417.0" font-size="9.2" fill="#2a2a2a" textLength="38.1" lengthAdjust="spacingAndGlyphs" stroke="#2a2a2a" stroke-width="0.15" >2226667</text>
<text x="54.5" y="438.5" font-size="9.2" fill="#2a2a2a" textLength="64.4" lengthAdjust="spacingAndGlyphs" stroke="#2a2a2a" stroke-width="0.15" >20190604-001</text>
<text x="127.5" y="438.5" font-size="9.2" fill="#2a2a2a" textLength="25.8" lengthAdjust="spacingAndGlyphs" stroke="#2a2a2a" stroke-width="0.15" >Sulzer</text>
<text x="209.4" y="438.5" font-size="9.2" fill="#2a2a2a" textLength="54.5" lengthAdjust="spacingAndGlyphs" stroke="#2a2a2a" stroke-width="0.15" >911 333 333</text>
<text x="54.5" y="451.6" font-size="9.2" fill="#2a2a2a" textLength="64.4" lengthAdjust="spacingAndGlyphs" stroke="#2a2a2a" stroke-width="0.15" >20190604-001</text>
<text x="127.5" y="451.6" font-size="9.2" fill="#2a2a2a" textLength="25.8" lengthAdjust="spacingAndGlyphs" stroke="#2a2a2a" stroke-width="0.15" >Sulzer</text>
<text x="209.4" y="451.6" font-size="9.2" fill="#2a2a2a" textLength="54.5" lengthAdjust="spacingAndGlyphs" stroke="#2a2a2a" stroke-width="0.15" >911 333 334</text>
<line x1="209.4" y1="387" x2="253.9" y2="387" stroke="#2a2a2a" stroke-width="1" />
<text x="326.7" y="438.5" font-size="9.2" fill="#2a2a2a" textLength="74.3" lengthAdjust="spacingAndGlyphs" stroke="#2a2a2a" stroke-width="0.15" >Onderdeel Test A</text>
<text x="326.7" y="451.6" font-size="9.2" fill="#2a2a2a" textLength="73.4" lengthAdjust="spacingAndGlyphs" stroke="#2a2a2a" stroke-width="0.15" >Onderdeel Test B</text>
<text x="697.2" y="438.5" font-size="9.2" fill="#2a2a2a" text-anchor="end" stroke="#2a2a2a" stroke-width="0.15" >3</text>
<text x="697.2" y="451.6" font-size="9.2" fill="#2a2a2a" text-anchor="end" stroke="#2a2a2a" stroke-width="0.15" >4</text>
<defs><filter id="sh" x="-10%" y="-10%" width="125%" height="130%"><feGaussianBlur stdDeviation="5.5"/></filter></defs>
<rect x="260" y="251" width="638" height="189" fill="#000" opacity="0.13" filter="url(#sh)"/>
<rect x="258" y="246.5" width="637" height="190" fill="#f0f0f0" />
<rect x="258.5" y="247" width="636" height="23.5" fill="#ffffff" />
<rect x="258.5" y="246.8" width="636" height="189" fill="none" stroke="#5a9fd8" stroke-width="1"/>
<text x="266.0" y="262.2" font-size="9.8" fill="#1a1a1a" textLength="96.6" lengthAdjust="spacingAndGlyphs" stroke="#1a1a1a" stroke-width="0.15" >Ontvangen onderdelen</text>
<path d="M878 254 L887.3 262.8 M887.3 254 L878 262.8" fill="none" stroke="#222" stroke-width="1.05" />
<text x="278.6" y="294.6" font-size="10.6" fill="#1a1a1a" font-weight="bold" textLength="157.7" lengthAdjust="spacingAndGlyphs" stroke="#1a1a1a" stroke-width="0.25" >Verwerk ontvangen onderdelen</text>
<text x="278.7" y="325.0" font-size="9.8" fill="#262626" textLength="210.9" lengthAdjust="spacingAndGlyphs" stroke="#262626" stroke-width="0.15" >Geef het aantal stuks op, dat u heeft ontvangen.</text>
<text x="278.7" y="349.7" font-size="8.6" fill="#1f1f1f" font-weight="bold" textLength="78.8" lengthAdjust="spacingAndGlyphs" stroke="#1f1f1f" stroke-width="0.25" >ONDERDEELNUMMER</text>
<text x="374.5" y="349.7" font-size="8.6" fill="#1f1f1f" font-weight="bold" textLength="24.1" lengthAdjust="spacingAndGlyphs" stroke="#1f1f1f" stroke-width="0.25" >NAAM</text>
<text x="579.8" y="349.7" font-size="8.6" fill="#1f1f1f" font-weight="bold" textLength="83.5" lengthAdjust="spacingAndGlyphs" stroke="#1f1f1f" stroke-width="0.25" >AANTAL IN BESTELLING</text>
<text x="695.1" y="349.7" font-size="8.6" fill="#1f1f1f" font-weight="bold" textLength="79.0" lengthAdjust="spacingAndGlyphs" stroke="#1f1f1f" stroke-width="0.25" >AANTAL ONTVANGEN</text>
<rect x="278.3" y="354.5" width="81.69999999999999" height="17.69999999999999" fill="#fff" />
<line x1="278.3" y1="355.0" x2="360" y2="355.0" stroke="#a0a0a0" stroke-width="1" />
<line x1="278.8" y1="354.5" x2="278.8" y2="372.2" stroke="#a0a0a0" stroke-width="1" />
<line x1="279.3" y1="356.0" x2="359" y2="356.0" stroke="#696969" stroke-width="1" />
<line x1="279.8" y1="355.5" x2="279.8" y2="371.2" stroke="#696969" stroke-width="1" />
<line x1="278.3" y1="371.7" x2="360" y2="371.7" stroke="#e3e3e3" stroke-width="1" />
<line x1="359.5" y1="354.5" x2="359.5" y2="372.2" stroke="#e3e3e3" stroke-width="1" />
<rect x="374.5" y="354.5" width="190.70000000000005" height="17.69999999999999" fill="#fff" />
<line x1="374.5" y1="355.0" x2="565.2" y2="355.0" stroke="#a0a0a0" stroke-width="1" />
<line x1="375.0" y1="354.5" x2="375.0" y2="372.2" stroke="#a0a0a0" stroke-width="1" />
<line x1="375.5" y1="356.0" x2="564.2" y2="356.0" stroke="#696969" stroke-width="1" />
<line x1="376.0" y1="355.5" x2="376.0" y2="371.2" stroke="#696969" stroke-width="1" />
<line x1="374.5" y1="371.7" x2="565.2" y2="371.7" stroke="#e3e3e3" stroke-width="1" />
<line x1="564.7" y1="354.5" x2="564.7" y2="372.2" stroke="#e3e3e3" stroke-width="1" />
<rect x="579.8" y="354.5" width="87.90000000000009" height="17.69999999999999" fill="#fff" />
<line x1="579.8" y1="355.0" x2="667.7" y2="355.0" stroke="#a0a0a0" stroke-width="1" />
<line x1="580.3" y1="354.5" x2="580.3" y2="372.2" stroke="#a0a0a0" stroke-width="1" />
<line x1="580.8" y1="356.0" x2="666.7" y2="356.0" stroke="#696969" stroke-width="1" />
<line x1="581.3" y1="355.5" x2="581.3" y2="371.2" stroke="#696969" stroke-width="1" />
<line x1="579.8" y1="371.7" x2="667.7" y2="371.7" stroke="#e3e3e3" stroke-width="1" />
<line x1="667.2" y1="354.5" x2="667.2" y2="372.2" stroke="#e3e3e3" stroke-width="1" />
<rect x="695.1" y="354.5" width="81.5" height="17.69999999999999" fill="#fff" />
<line x1="695.1" y1="355.0" x2="776.6" y2="355.0" stroke="#a0a0a0" stroke-width="1" />
<line x1="695.6" y1="354.5" x2="695.6" y2="372.2" stroke="#a0a0a0" stroke-width="1" />
<line x1="696.1" y1="356.0" x2="775.6" y2="356.0" stroke="#696969" stroke-width="1" />
<line x1="696.6" y1="355.5" x2="696.6" y2="371.2" stroke="#696969" stroke-width="1" />
<line x1="695.1" y1="371.7" x2="776.6" y2="371.7" stroke="#e3e3e3" stroke-width="1" />
<line x1="776.1" y1="354.5" x2="776.1" y2="372.2" stroke="#e3e3e3" stroke-width="1" />
<text x="287.3" y="366.5" font-size="9.8" fill="#a8a8a8" textLength="48.2" lengthAdjust="spacingAndGlyphs" stroke="#a8a8a8" stroke-width="0.15" >911 333 334</text>
<text x="383.5" y="366.5" font-size="9.8" fill="#a8a8a8" textLength="66.7" lengthAdjust="spacingAndGlyphs" stroke="#a8a8a8" stroke-width="0.15" >Onderdeel Test B</text>
<text x="590.0" y="366.5" font-size="9.8" fill="#a8a8a8" stroke="#a8a8a8" stroke-width="0.15" >4</text>
<text x="704.0" y="366.5" font-size="9.8" fill="#222" stroke="#222" stroke-width="0.15" >3</text>
<line x1="709.8" y1="358" x2="709.8" y2="368" stroke="#000" stroke-width="1" />
<rect x="279" y="396" width="9.4" height="8.8" fill="#fff" />
<line x1="279" y1="396.5" x2="288.4" y2="396.5" stroke="#a0a0a0" stroke-width="1" />
<line x1="279.5" y1="396" x2="279.5" y2="404.8" stroke="#a0a0a0" stroke-width="1" />
<line x1="280" y1="397.5" x2="288" y2="397.5" stroke="#696969" stroke-width="1" />
<line x1="280.5" y1="397" x2="280.5" y2="404" stroke="#696969" stroke-width="1" />
<text x="292.9" y="403.7" font-size="8.6" fill="#1f1f1f" font-weight="bold" textLength="90.8" lengthAdjust="spacingAndGlyphs" stroke="#1f1f1f" stroke-width="0.25" >MARKEER ALS VOLTOOID</text>
<rect x="611.6" y="392.8" width="76.29999999999995" height="24.899999999999977" fill="#f0f0f0" />
<line x1="611.6" y1="393.3" x2="687.9" y2="393.3" stroke="#ffffff" stroke-width="1" />
<line x1="612.1" y1="392.8" x2="612.1" y2="417.7" stroke="#ffffff" stroke-width="1" />
<line x1="611.6" y1="417.2" x2="687.9" y2="417.2" stroke="#696969" stroke-width="1.2" />
<line x1="687.4" y1="392.8" x2="687.4" y2="417.7" stroke="#696969" stroke-width="1.2" />
<line x1="612.6" y1="415.9" x2="686.9" y2="415.9" stroke="#a0a0a0" stroke-width="1" />
<line x1="686.1" y1="393.8" x2="686.1" y2="416.7" stroke="#a0a0a0" stroke-width="1" />
<text x="627.0" y="409.0" font-size="9.7" fill="#262626" textLength="44.2" lengthAdjust="spacingAndGlyphs" stroke="#262626" stroke-width="0.15" >Annuleren</text>
<rect x="701.4" y="392.8" width="76.5" height="24.899999999999977" fill="#f0f0f0" />
<line x1="701.4" y1="393.3" x2="777.9" y2="393.3" stroke="#ffffff" stroke-width="1" />
<line x1="701.9" y1="392.8" x2="701.9" y2="417.7" stroke="#ffffff" stroke-width="1" />
<line x1="701.4" y1="417.2" x2="777.9" y2="417.2" stroke="#696969" stroke-width="1.2" />
<line x1="777.4" y1="392.8" x2="777.4" y2="417.7" stroke="#696969" stroke-width="1.2" />
<line x1="702.4" y1="415.9" x2="776.9" y2="415.9" stroke="#a0a0a0" stroke-width="1" />
<line x1="776.1" y1="393.8" x2="776.1" y2="416.7" stroke="#a0a0a0" stroke-width="1" />
<text x="716.3" y="409.0" font-size="9.7" fill="#262626" textLength="45.4" lengthAdjust="spacingAndGlyphs" stroke="#262626" stroke-width="0.15" >Verwerken</text>
<path d="M741.5 405.5 V419 L744.5 416.2 L747 421.5 L749 420.6 L746.6 415.5 L750.5 415.2 Z" fill="#fff" stroke="#111" stroke-width="0.9" />
<line x1="287.4" y1="412.2" x2="302.6" y2="479.5" stroke="#2f5597" stroke-width="2" />
<rect x="300" y="480.2" width="42.5" height="33.5" fill="#f21f1f" stroke="#2f5597" stroke-width="2"/>
<text x="321.3" y="504.0" font-size="16.5" fill="#ffffff" font-weight="bold" text-anchor="middle" stroke="#ffffff" stroke-width="0.25" >3</text>
<rect x="0" y="649" width="1154" height="22" fill="#e6e6e6" />
<line x1="0" y1="649.5" x2="1136" y2="649.5" stroke="#bdbdbd" stroke-width="1" />
<rect x="197.6" y="649" width="80" height="19" fill="#ffffff" />
<line x1="197.6" y1="649" x2="197.6" y2="668" stroke="#d0d0d0" stroke-width="1" />
<line x1="277.5" y1="649" x2="277.5" y2="668" stroke="#d0d0d0" stroke-width="1" />
<rect x="197.6" y="667" width="80" height="2" fill="#217346" />
<path d="M21.5 659.5 L24.5 656.5 V662.5 Z" fill="#c4c4c4" stroke="none" stroke-width="1" />
<path d="M47 656.5 L50 659.5 L47 662.5 Z" fill="#c4c4c4" stroke="none" stroke-width="1" />
<line x1="80.6" y1="654.5" x2="80.6" y2="667" stroke="#b4b4b4" stroke-width="1" />
<line x1="391.5" y1="654.5" x2="391.5" y2="667" stroke="#b4b4b4" stroke-width="1" />
<line x1="478.2" y1="654.5" x2="478.2" y2="667" stroke="#b4b4b4" stroke-width="1" />
<line x1="542.2" y1="654.5" x2="542.2" y2="667" stroke="#b4b4b4" stroke-width="1" />
<text x="93.0" y="662.7" font-size="9.9" fill="#474747" textLength="91.0" lengthAdjust="spacingAndGlyphs" stroke="#474747" stroke-width="0.15" >Verbruiksregistratie</text>
<text x="208.0" y="662.7" font-size="9.9" fill="#217346" font-weight="bold" textLength="59.2" lengthAdjust="spacingAndGlyphs" stroke="#217346" stroke-width="0.25" >Bestellingen</text>
<text x="288.6" y="662.7" font-size="9.9" fill="#474747" textLength="90.1" lengthAdjust="spacingAndGlyphs" stroke="#474747" stroke-width="0.15" >Onderdelen Beheer</text>
<text x="404.4" y="662.7" font-size="9.9" fill="#474747" textLength="59.5" lengthAdjust="spacingAndGlyphs" stroke="#474747" stroke-width="0.15" >Inventarislijst</text>
<text x="487.9" y="662.7" font-size="9.9" fill="#474747" textLength="43.8" lengthAdjust="spacingAndGlyphs" stroke="#474747" stroke-width="0.15" >Database</text>
<circle cx="575.4" cy="659.3" r="5.6" fill="none" stroke="#6a6a6a" stroke-width="1"/>
<path d="M572.4 659.3 H578.4 M575.4 656.3 V662.3" fill="none" stroke="#6a6a6a" stroke-width="1" />
<rect x="692.5" y="656" width="1.3" height="1.3" fill="#a0a0a0" />
<rect x="692.5" y="659" width="1.3" height="1.3" fill="#a0a0a0" />
<rect x="692.5" y="662" width="1.3" height="1.3" fill="#a0a0a0" />
<rect x="717.4" y="654.4" width="208" height="11.8" fill="#dadada" />
<rect x="706.2" y="654.3" width="11.2" height="12" fill="#fff" stroke="#c6c6c6" stroke-width="0.8"/>
<path d="M713.5 657.5 V663 L710 660.3 Z" fill="#444" stroke="none" stroke-width="1" />
<rect x="921.6" y="654.8" width="201.4" height="11" fill="#fff" stroke="#c6c6c6" stroke-width="0.8"/>
<rect x="1125.6" y="654.3" width="11" height="12" fill="#fff" stroke="#c6c6c6" stroke-width="0.8"/>
<path d="M1129.5 657.5 V663 L1133 660.3 Z" fill="#444" stroke="none" stroke-width="1" />
<rect x="0" y="671" width="1154" height="18" fill="#f3f3f3" />
<line x1="0" y1="671.5" x2="1154" y2="671.5" stroke="#cdcdcd" stroke-width="1" />
<rect x="7.6" y="675.8" width="9.1" height="8.6" fill="none" stroke="#555" stroke-width="1"/>
<rect x="10.8" y="675.3" width="6.4" height="2.1" fill="#555" />
<circle cx="8.8" cy="676.8" r="2.3" fill="#555" stroke="#f3f3f3" stroke-width="0.6"/>
<rect x="9.6" y="680.5" width="1" height="2.8" fill="#777" />
<rect x="12" y="680.5" width="1" height="2.8" fill="#777" />
<rect x="14.4" y="680.5" width="1" height="2.8" fill="#777" />
<rect x="12" y="679" width="1" height="0.8" fill="#777" />
<rect x="14.4" y="679" width="1" height="0.8" fill="#777" />
<rect x="925.3" y="671.5" width="29.3" height="17.5" fill="#cfcfcf" />
<rect x="934.5" y="675.5" width="9" height="9" fill="none" stroke="#5a5a5a" stroke-width="0.9"/>
<line x1="937.5" y1="675.5" x2="937.5" y2="684.5" stroke="#5a5a5a" stroke-width="0.8" />
<line x1="940.5" y1="675.5" x2="940.5" y2="684.5" stroke="#5a5a5a" stroke-width="0.8" />
<line x1="934.5" y1="678.5" x2="943.5" y2="678.5" stroke="#5a5a5a" stroke-width="0.8" />
<line x1="934.5" y1="681.5" x2="943.5" y2="681.5" stroke="#5a5a5a" stroke-width="0.8" />
<rect x="965.8" y="675.5" width="9" height="9" fill="none" stroke="#5a5a5a" stroke-width="0.9"/>
<rect x="968" y="677.7" width="4.6" height="4.6" fill="none" stroke="#5a5a5a" stroke-width="0.8"/>
<rect x="996.3" y="675.5" width="9" height="9" fill="none" stroke="#5a5a5a" stroke-width="0.9"/>
<path d="M999 675.5 V680 H1002.5 V675.5" fill="none" stroke="#5a5a5a" stroke-width="0.9" />
<line x1="1020.5" y1="680.2" x2="1024.5" y2="680.2" stroke="#5a5a5a" stroke-width="1.2" />
<line x1="1028" y1="680.2" x2="1108.5" y2="680.2" stroke="#b0b0b0" stroke-width="0.8" />
<rect x="1066.8" y="676" width="3.4" height="8.6" fill="#6a6a6a" />
<path d="M1110.5 680.2 H1116.5 M1113.5 677.2 V683.2" fill="none" stroke="#5a5a5a" stroke-width="1.2" />
<text x="1126.7" y="684.0" font-size="9.6" fill="#474747" textLength="20.3" lengthAdjust="spacingAndGlyphs" stroke="#474747" stroke-width="0.15" >100%</text>
<rect x="0" y="689" width="1154" height="32" fill="#0b0e15" />
<path d="M12.8 699.5 L18.5 698.7 V704 H12.8 Z M19.5 698.5 L26 697.6 V704 H19.5 Z M12.8 705 H18.5 V710.3 L12.8 709.5 Z M19.5 705 H26 V711.4 L19.5 710.5 Z" fill="#fff" stroke="none" stroke-width="1" />
<circle cx="60" cy="703.8" r="4.4" fill="none" stroke="#fff" stroke-width="1.1"/>
<line x1="56.8" y1="707" x2="51.5" y2="712.3" stroke="#fff" stroke-width="1.2" />
<path d="M90 700 V698.6 H98.8 V700 M90 708.6 V710 H98.8 V708.6" fill="none" stroke="#fff" stroke-width="1" />
<rect x="90.5" y="702" width="7.8" height="4.6" fill="none" stroke="#fff" stroke-width="1"/>
<line x1="101.3" y1="698" x2="101.3" y2="711" stroke="#fff" stroke-width="1" />
<rect x="100.2" y="702.2" width="2.2" height="2.2" fill="#fff" />
<g transform="translate(129.2 696.2)"><path d="M0.3 8.2 C1.5 3 5 0 9.5 0 C13.8 0 16 3 16 7.5 V10.2 H5.2 C5.5 13 7.8 14.6 10.8 14.6 C12.6 14.6 14.4 14 15.6 13.2 V16.4 C14 17.2 12 17.5 10 17.5 C4.5 17.5 1.2 14.3 1.2 10 C1.2 6.5 3.5 4 6.5 3.2 C3.5 3.8 1.5 5.5 0.3 8.2 Z M5.4 7.4 H11.6 C11.5 5.5 10.2 4.2 8.6 4.2 C7 4.2 5.7 5.5 5.4 7.4 Z" fill="#2b88d8" fill-rule="evenodd"/></g>
<path d="M167.9 698 H174.5 L175.5 699 H184.5 V711.7 H167.9 Z" fill="#f6d887" stroke="none" stroke-width="1" />
<rect x="168.5" y="698.6" width="4.5" height="0.9" fill="#fff1c0" />
<path d="M171.2 711.7 V705 H181.8 V711.7 H179.3 V707.6 H173.8 V711.7 Z" fill="#3aa0ea" stroke="none" stroke-width="1" />
<path d="M206 699.9 H224.2 V712.4 Q224.2 713.8 222.8 713.8 H207.4 Q206 713.8 206 712.4 Z" fill="#fff" stroke="none" stroke-width="1" />
<path d="M211.6 699.9 V698.6 Q211.6 695.1 215.1 695.1 Q218.6 695.1 218.6 698.6 V699.9" fill="none" stroke="#e8e8e8" stroke-width="1" />
<rect x="210.7" y="702" width="4.3" height="4.3" fill="#d84a2a" />
<rect x="215.7" y="702" width="4.3" height="4.3" fill="#7aa23a" />
<rect x="210.7" y="706.9" width="4.3" height="4.3" fill="#2d9be8" />
<rect x="215.7" y="706.9" width="4.3" height="4.3" fill="#f0a830" />
<path d="M245.3 701 L255.2 696.6 L264.7 701 V712.2 H245.3 Z" fill="#fff" stroke="none" stroke-width="1" />
<path d="M247.6 702 H262.3 L256.9 705 L261 709.5 L254.6 705.7 Z" fill="#0b0e15" stroke="none" stroke-width="1" />
<rect x="275" y="689" width="38.1" height="32" fill="#3a3a3d" />
<rect x="275" y="718.8" width="38.1" height="2.2" fill="#8cc4f0" />
<rect x="289.1" y="696.1" width="7.5" height="4.4" fill="#4a955e" />
<rect x="296.6" y="696.1" width="7.4" height="4.4" fill="#6abf86" />
<rect x="289.1" y="700.5" width="7.5" height="4.3" fill="#3f8753" />
<rect x="296.6" y="700.5" width="7.4" height="4.3" fill="#58a970" />
<rect x="289.1" y="704.8" width="7.5" height="4.2" fill="#377a4a" />
<rect x="296.6" y="704.8" width="7.4" height="4.2" fill="#468e5c" />
<rect x="289.1" y="709" width="7.5" height="4" fill="#2e6a3f" />
<rect x="296.6" y="709" width="7.4" height="4" fill="#2f6f43" />
<rect x="284.5" y="700.2" width="9.5" height="9.5" fill="#2f7d47" />
<path d="M286.9 702.4 L291.6 707.6 M291.6 702.4 L286.9 707.6" fill="none" stroke="#f2f2f2" stroke-width="1.4" />
<circle cx="966.7" cy="700.5" r="2.1" fill="none" stroke="#ffffff" stroke-width="0.9"/>
<path d="M963.8 705.5 Q964.5 702.8 966.7 702.6 Q969 702.8 969.8 705" fill="none" stroke="#ffffff" stroke-width="0.9" />
<circle cx="961.6" cy="705" r="2.1" fill="#0b0e15" stroke="#ffffff" stroke-width="0.9"/>
<path d="M958.3 710.2 Q959 707.4 961.6 707.2 Q964.2 707.4 964.9 710.2" fill="none" stroke="#ffffff" stroke-width="0.9" />
<path d="M988 707.5 L993 702.5 L998 707.5" fill="none" stroke="#ffffff" stroke-width="1.1" />
<path d="M1008 701.5 H1018.5 V707.5 H1008 Z" fill="none" stroke="#ffffff" stroke-width="0.9" />
<rect x="1009.5" y="703" width="7.5" height="3" fill="#ffffff" />
<path d="M1005.5 704.5 H1008 M1006.8 702 V701 M1005.5 702.5 H1008" fill="none" stroke="#ffffff" stroke-width="0.9" />
<path d="M1026 700 H1038 V707.5 H1026 Z M1032 707.5 V710 M1029 710.5 H1035" fill="none" stroke="#ffffff" stroke-width="0.9" />
<path d="M1025.5 699 V703 H1029 V699 Z" fill="#0b0e15" stroke="#ffffff" stroke-width="0.8" />
<path d="M1044.5 702 H1047 L1050.5 698.5 V710.5 L1047 707 H1044.5 Z" fill="none" stroke="#ffffff" stroke-width="0.9" />
<path d="M1052.5 701.5 Q1054.5 704.5 1052.5 707.5 M1054.8 699.8 Q1058 704.5 1054.8 709.2" fill="none" stroke="#ffffff" stroke-width="0.9" />
<text x="1075.0" y="700.8" font-size="9.6" fill="#ffffff" textLength="20.8" lengthAdjust="spacingAndGlyphs" stroke="#ffffff" stroke-width="0.15" >14:41</text>
<text x="1067.0" y="715.3" font-size="9.6" fill="#ffffff" textLength="37.2" lengthAdjust="spacingAndGlyphs" stroke="#ffffff" stroke-width="0.15" >4-6-2019</text>
<path d="M1121.5 698.5 H1134 V707.5 H1129.8 L1127.8 710 L1125.8 707.5 H1121.5 Z" fill="none" stroke="#ffffff" stroke-width="0.9" />
<line x1="1150.5" y1="689" x2="1150.5" y2="721" stroke="#5a5a60" stroke-width="1" />
</svg>
</body></html>
